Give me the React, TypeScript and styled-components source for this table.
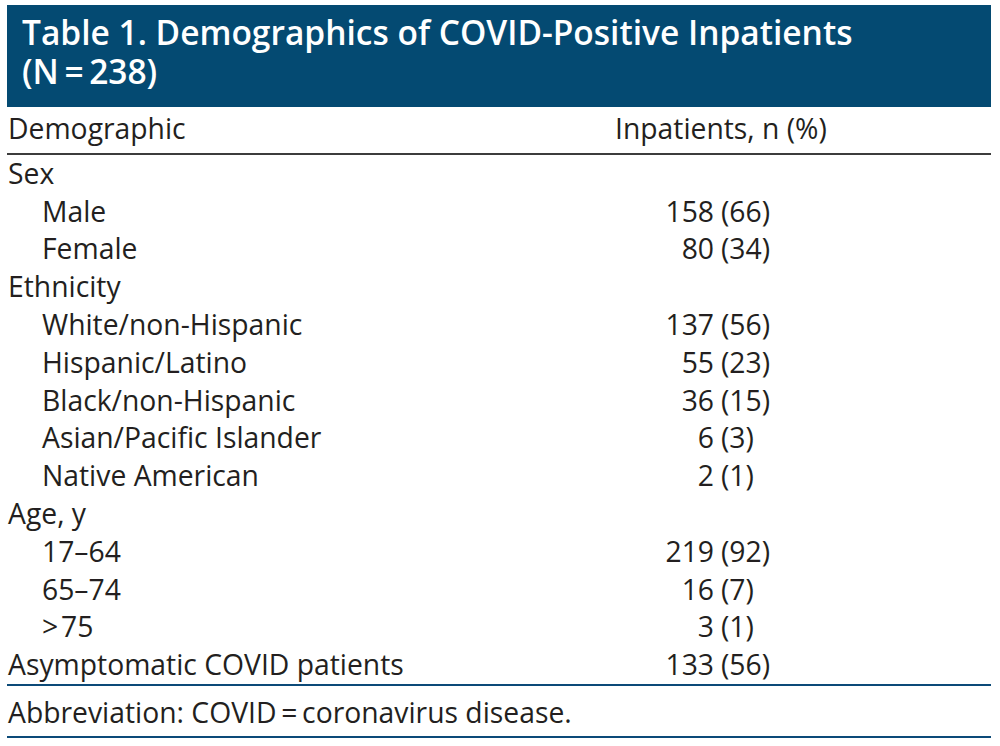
import React from "react";
import styled, { createGlobalStyle } from "styled-components";

const Global = createGlobalStyle`
  html, body { margin: 0; padding: 0; background: #fff; }
  body { font-family: "Open Sans", "Noto Sans", sans-serif; color: #231f20; }
`;

const Wrap = styled.div`
  width: 984px;
  margin: 5px 0 0 7px;
`;

const TitleBar = styled.div`
  background: #044a72;
  color: #fff;
  font-weight: 600;
  font-size: 33.5px;
  padding: 7.5px 12px 16.5px 15px;
  white-space: nowrap;
`;

const TitleLine = styled.div`
  line-height: 39px;
`;

const Grid = styled.div`
  display: grid;
  grid-template-columns: 608px 99px 1fr;
  font-size: 28.3px;
  line-height: 37.8px;
`;

const HeadCell = styled.div<{ $span?: boolean }>`
  padding: 3px 0 5px 1px;
  border-bottom: 2px solid #3c3c3c;
  grid-column: ${(p) => (p.$span ? "2 / -1" : "1")};
  padding-left: ${(p) => (p.$span ? "0" : "1px")};
`;

const Label = styled.div<{ $indent?: boolean }>`
  grid-column: 1;
  padding-left: ${(p) => (p.$indent ? "35px" : "1px")};
  white-space: nowrap;
`;

const Count = styled.div`
  grid-column: 2;
  text-align: right;
`;

const Pct = styled.div`
  grid-column: 3;
  padding-left: 7px;
`;

const Spacer = styled.div`
  grid-column: 2 / -1;
`;

const Rule = styled.div`
  grid-column: 1 / -1;
  height: 2px;
  background: #0c4a78;
`;

const Foot = styled.div`
  grid-column: 1 / -1;
  padding: 8px 0 4px 1px;
  white-space: nowrap;
`;

type Row = { label: string; indent?: boolean; n?: string; p?: string };

const rows: Row[] = [
  { label: "Sex" },
  { label: "Male", indent: true, n: "158", p: "66" },
  { label: "Female", indent: true, n: "80", p: "34" },
  { label: "Ethnicity" },
  { label: "White/non-Hispanic", indent: true, n: "137", p: "56" },
  { label: "Hispanic/Latino", indent: true, n: "55", p: "23" },
  { label: "Black/non-Hispanic", indent: true, n: "36", p: "15" },
  { label: "Asian/Pacific Islander", indent: true, n: "6", p: "3" },
  { label: "Native American", indent: true, n: "2", p: "1" },
  { label: "Age, y" },
  { label: "17\u201364", indent: true, n: "219", p: "92" },
  { label: "65\u201374", indent: true, n: "16", p: "7" },
  { label: ">\u200A75", indent: true, n: "3", p: "1" },
  { label: "Asymptomatic COVID patients", n: "133", p: "56" },
];

export default function App() {
  return (
    <>
      <Global />
      <Wrap>
        <TitleBar>
          <TitleLine>Table 1. Demographics of COVID-Positive Inpatients</TitleLine>
          <TitleLine>(N{"\u2009=\u2009"}238)</TitleLine>
        </TitleBar>
        <Grid>
          <HeadCell>Demographic</HeadCell>
          <HeadCell $span>Inpatients, n (%)</HeadCell>
          {rows.map((r) => (
            <React.Fragment key={r.label}>
              <Label $indent={r.indent}>{r.label}</Label>
              {r.n ? (
                <>
                  <Count>{r.n}</Count>
                  <Pct>({r.p})</Pct>
                </>
              ) : (
                <Spacer />
              )}
            </React.Fragment>
          ))}
          <Rule />
          <Foot>Abbreviation: COVID{"\u2009=\u2009"}coronavirus disease.</Foot>
          <Rule />
        </Grid>
      </Wrap>
    </>
  );
}
